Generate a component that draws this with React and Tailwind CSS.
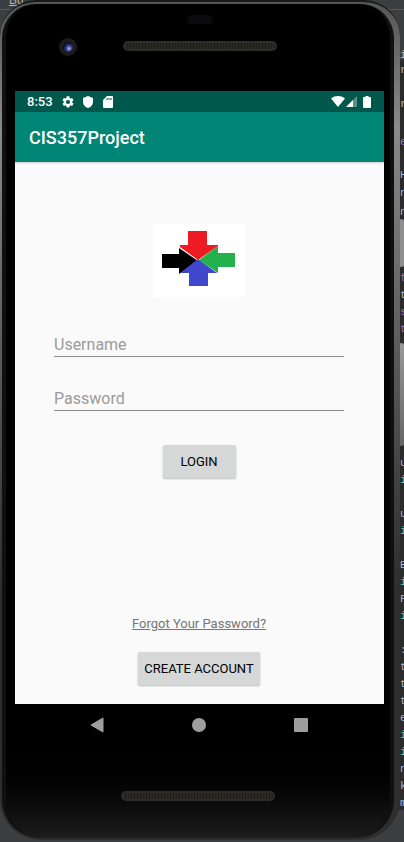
import React from "react";

const codeGlyphs = [
  { top: 47, text: "i", color: "text-[#c8cbb8]" },
  { top: 62, text: "r", color: "text-[#a9b7c6]" },
  { top: 96, text: "r", color: "text-[#a9b7c6]" },
  { top: 134, text: "e", color: "text-[#9876aa]" },
  { top: 167, text: "H", color: "text-[#a9b7c6]" },
  { top: 185, text: "n", color: "text-[#a9b7c6]" },
  { top: 204, text: "n", color: "text-[#a9b7c6]" },
  { top: 270, text: "f", color: "text-[#9876aa]" },
  { top: 287, text: "t", color: "text-[#a9b7c6]" },
  { top: 304, text: "s", color: "text-[#9876aa]" },
  { top: 321, text: "t", color: "text-[#9876aa]" },
  { top: 455, text: "u", color: "text-[#a9b7c6]" },
  { top: 472, text: "i", color: "text-[#6fc3b0]" },
  { top: 506, text: "u", color: "text-[#a9b7c6]" },
  { top: 523, text: "i", color: "text-[#6fc3b0]" },
  { top: 557, text: "E", color: "text-[#a9b7c6]" },
  { top: 574, text: "i", color: "text-[#6fc3b0]" },
  { top: 591, text: "F", color: "text-[#a9b7c6]" },
  { top: 608, text: "i", color: "text-[#6fc3b0]" },
  { top: 642, text: ":", color: "text-[#a9b7c6]" },
  { top: 659, text: "t", color: "text-[#a9b7c6]" },
  { top: 676, text: "t", color: "text-[#a9b7c6]" },
  { top: 693, text: "t", color: "text-[#a9b7c6]" },
  { top: 710, text: "e", color: "text-[#a9b7c6]" },
  { top: 727, text: "i", color: "text-[#6fc3b0]" },
  { top: 744, text: "i", color: "text-[#6fc3b0]" },
  { top: 761, text: "n", color: "text-[#a9b7c6]" },
  { top: 778, text: "k", color: "text-[#a9b7c6]" },
  { top: 795, text: "m", color: "text-[#a9b7c6]" },
];

function EditorBackdrop() {
  return (
    <div aria-hidden="true" className="absolute inset-0 overflow-hidden bg-[#3c3f41]">
      <span className="absolute -top-2 left-[9px] font-['Liberation_Sans'] text-xs text-[#b0b0b0] underline">Bu</span>
      <div className="absolute top-[9px] h-px w-full bg-[#55585a]" />
      <div className="absolute top-[60px] right-0 h-[750px] w-2 bg-[#2b2b2b]" />
      <div className="absolute top-10 left-0 h-[360px] w-1 bg-linear-to-b from-[#777] via-[#aaa] via-20% to-[#333]" />
      {codeGlyphs.map((g) => (
        <span
          key={g.top}
          style={{ top: g.top }}
          className={`absolute left-[400px] font-['Liberation_Mono'] text-[11px] leading-4 ${g.color}`}
        >
          {g.text}
        </span>
      ))}
      <div className="absolute top-[219px] right-0 h-12 w-[5px] rounded-sm bg-[#8f8f8f]" />
      <div className="absolute top-[343px] right-0 h-[103px] w-[5px] rounded-sm bg-linear-to-b from-[#999] to-[#666]" />
    </div>
  );
}

function Speaker() {
  return (
    <div className="h-[10px] w-[154px] rounded-full border-2 border-[#2c2c2a] bg-[repeating-linear-gradient(90deg,#2a2923_0px,#2a2923_2px,#1c1b17_2px,#1c1b17_3px)]" />
  );
}

function StatusBar() {
  return (
    <div className="flex h-[21px] items-center bg-[#00574b] pr-[13px] pl-3 text-white">
      <span className="text-[13px] leading-5 font-medium">8:53</span>
      <svg className="ml-2 size-[14px]" viewBox="0 0 24 24" fill="currentColor">
        <path d="M19.14 12.94c.04-.3.06-.61.06-.94s-.02-.64-.07-.94l2.03-1.58a.49.49 0 0 0 .12-.61l-1.92-3.32a.49.49 0 0 0-.59-.22l-2.39.96a7 7 0 0 0-1.62-.94l-.36-2.54A.48.48 0 0 0 13.92 2h-3.84a.48.48 0 0 0-.47.41l-.36 2.54c-.59.24-1.13.57-1.62.94l-2.39-.96a.48.48 0 0 0-.59.22L2.74 8.87a.47.47 0 0 0 .12.61l2.03 1.58a6.4 6.4 0 0 0 0 1.88l-2.03 1.58a.49.49 0 0 0-.12.61l1.92 3.32c.12.22.37.29.59.22l2.39-.96c.5.38 1.03.7 1.62.94l.36 2.54c.05.24.24.41.48.41h3.84c.24 0 .44-.17.47-.41l.36-2.54a6.8 6.8 0 0 0 1.62-.94l2.39.96c.22.08.47 0 .59-.22l1.92-3.32a.47.47 0 0 0-.12-.61zM12 15.6a3.6 3.6 0 1 1 0-7.2 3.6 3.6 0 0 1 0 7.2z" />
      </svg>
      <svg className="ml-2 h-3 w-[10px]" viewBox="0 0 10 12" fill="currentColor">
        <path d="M5 0 10 2v4c0 3-2 5.200-5 6-3-.8-5-3-5-6V2z" />
      </svg>
      <svg className="ml-[10px] h-3 w-[10px]" viewBox="0 0 10 12" fill="currentColor">
        <path fillRule="evenodd" d="M4 0h5a1 1 0 0 1 1 1v10a1 1 0 0 1-1 1H1a1 1 0 0 1-1-1V4zM3.500 2v2h1V2zm2 0v2h1V2zm2 0v2h1V2z" />
      </svg>
      <svg className="ml-auto h-[11px] w-[14px]" viewBox="0 0 14 11" fill="currentColor">
        <path d="M7 11 0 2.500C4-.8 10-.8 14 2.500z" />
      </svg>
      <svg className="ml-px h-[11px] w-3" viewBox="0 0 12 11" fill="currentColor">
        <path opacity=".35" d="M0 11 11 0v11z" />
        <path d="M0 11 7 4v7z" />
      </svg>
      <svg className="ml-[5px] h-3 w-2" viewBox="0 0 8 12" fill="currentColor">
        <path d="M2.500 0h3v1H7a1 1 0 0 1 1 1v9a1 1 0 0 1-1 1H1a1 1 0 0 1-1-1V2a1 1 0 0 1 1-1h1.500z" />
      </svg>
    </div>
  );
}

function Logo() {
  return (
    <svg className="h-[73px] w-[92px] bg-white" viewBox="0 0 92 73" role="img" aria-label="Four arrows">
      <path fill="#000" d="M9 30h17v-6l19 13-19 13v-6H9z" />
      <path fill="#3f48cc" d="M36 62h19V49h9L45 35 27 49h9z" />
      <path fill="#22b14c" d="M82 29H65v-7L46 36l19 13v-6h17z" />
      <path fill="#ed1c24" d="M35 7h19v14h11v1L45 36 27 23v-2h8z" />
    </svg>
  );
}

function Field({ id, label, type }) {
  return (
    <div className="w-full">
      <label htmlFor={id} className="sr-only">{label}</label>
      <input
        id={id}
        type={type}
        placeholder={label}
        className="block h-[30px] w-full border-b border-[#8c8c8c] bg-transparent pt-[6px] text-base text-[#222] outline-none placeholder:text-[#9b9b9b]"
      />
    </div>
  );
}

function RaisedButton({ children, className }) {
  return (
    <button
      type="button"
      className={`h-[33px] rounded-xs bg-[#d6d7d7] text-[13px] whitespace-nowrap text-black shadow-[0_1px_2px_rgba(0,0,0,0.25)] ${className}`}
    >
      {children}
    </button>
  );
}

export default function App() {
  return (
    <div className="relative h-screen min-h-[842px] overflow-hidden font-['Roboto',sans-serif]">
      <EditorBackdrop />
      <div className="relative flex h-full pr-1 pb-[2px]">
        <div className="flex w-full rounded-t-[36px] rounded-b-[40px] border-t-2 border-[#1a1a1a] bg-linear-to-b from-[#555] via-[#8a8a8a] via-15% to-[#2e2e2e] to-70% pt-[2px] pr-[6px] pb-[2px] pl-[2px]">
          <div className="flex w-full flex-col rounded-t-[34px] rounded-b-[38px] border-x-4 border-[#101010] bg-linear-to-b from-black from-88% to-[#1c1c1c] pr-[6px] pl-[9px]">
            <header className="relative flex h-[87px] shrink-0 justify-center">
              <div className="absolute top-[34px] left-[44px] grid size-[18px] place-items-center rounded-full bg-[#1c1c1e]">
                <div className="size-[10px] rounded-full bg-[radial-gradient(circle_at_60%_65%,#b6c0ff_0%,#38428f_30%,#080d28_65%)]" />
              </div>
              <div className="absolute top-[11px] h-[9px] w-[26px] rounded-full bg-[#0b0b0e]" />
              <div className="mt-[37px]"><Speaker /></div>
            </header>
            <main className="flex h-[613px] shrink-0 flex-col bg-[#fafafa]">
              <StatusBar />
              <div className="flex h-[50px] shrink-0 items-center bg-[#008577] px-[14px] pt-[2px] shadow-[0_1px_2px_rgba(0,0,0,0.2)]">
                <h1 className="text-lg font-medium text-white">CIS357Project</h1>
              </div>
              <form className="flex grow flex-col items-center pr-10 pl-[39px]">
                <div className="mt-[62px]"><Logo /></div>
                <div className="mt-[30px] flex w-full flex-col gap-6">
                  <Field id="username" label="Username" type="text" />
                  <Field id="password" label="Password" type="password" />
                </div>
                <RaisedButton className="mt-[34px] w-[73px]">LOGIN</RaisedButton>
                <a href="#forgot" className="mt-auto text-[13px] leading-5 text-[#757575] underline">Forgot Your Password?</a>
                <RaisedButton className="mt-[18px] mb-[19px] w-[122px]">CREATE ACCOUNT</RaisedButton>
              </form>
            </main>
            <nav className="flex h-[42px] shrink-0 items-center justify-center gap-[88px] pr-[2px] text-[#9e9e9e]">
              <button type="button" aria-label="Back">
                <svg className="h-4 w-[14px]" viewBox="0 0 14 16" fill="currentColor"><path d="M13 1v14L1 8z" stroke="currentColor" strokeLinejoin="round" /></svg>
              </button>
              <button type="button" aria-label="Home" className="size-[14px] rounded-full bg-current" />
              <button type="button" aria-label="Overview" className="size-[14px] rounded-[1px] bg-current" />
            </nav>
            <footer className="mt-[45px] flex justify-center pr-1"><Speaker /></footer>
          </div>
        </div>
      </div>
    </div>
  );
}
